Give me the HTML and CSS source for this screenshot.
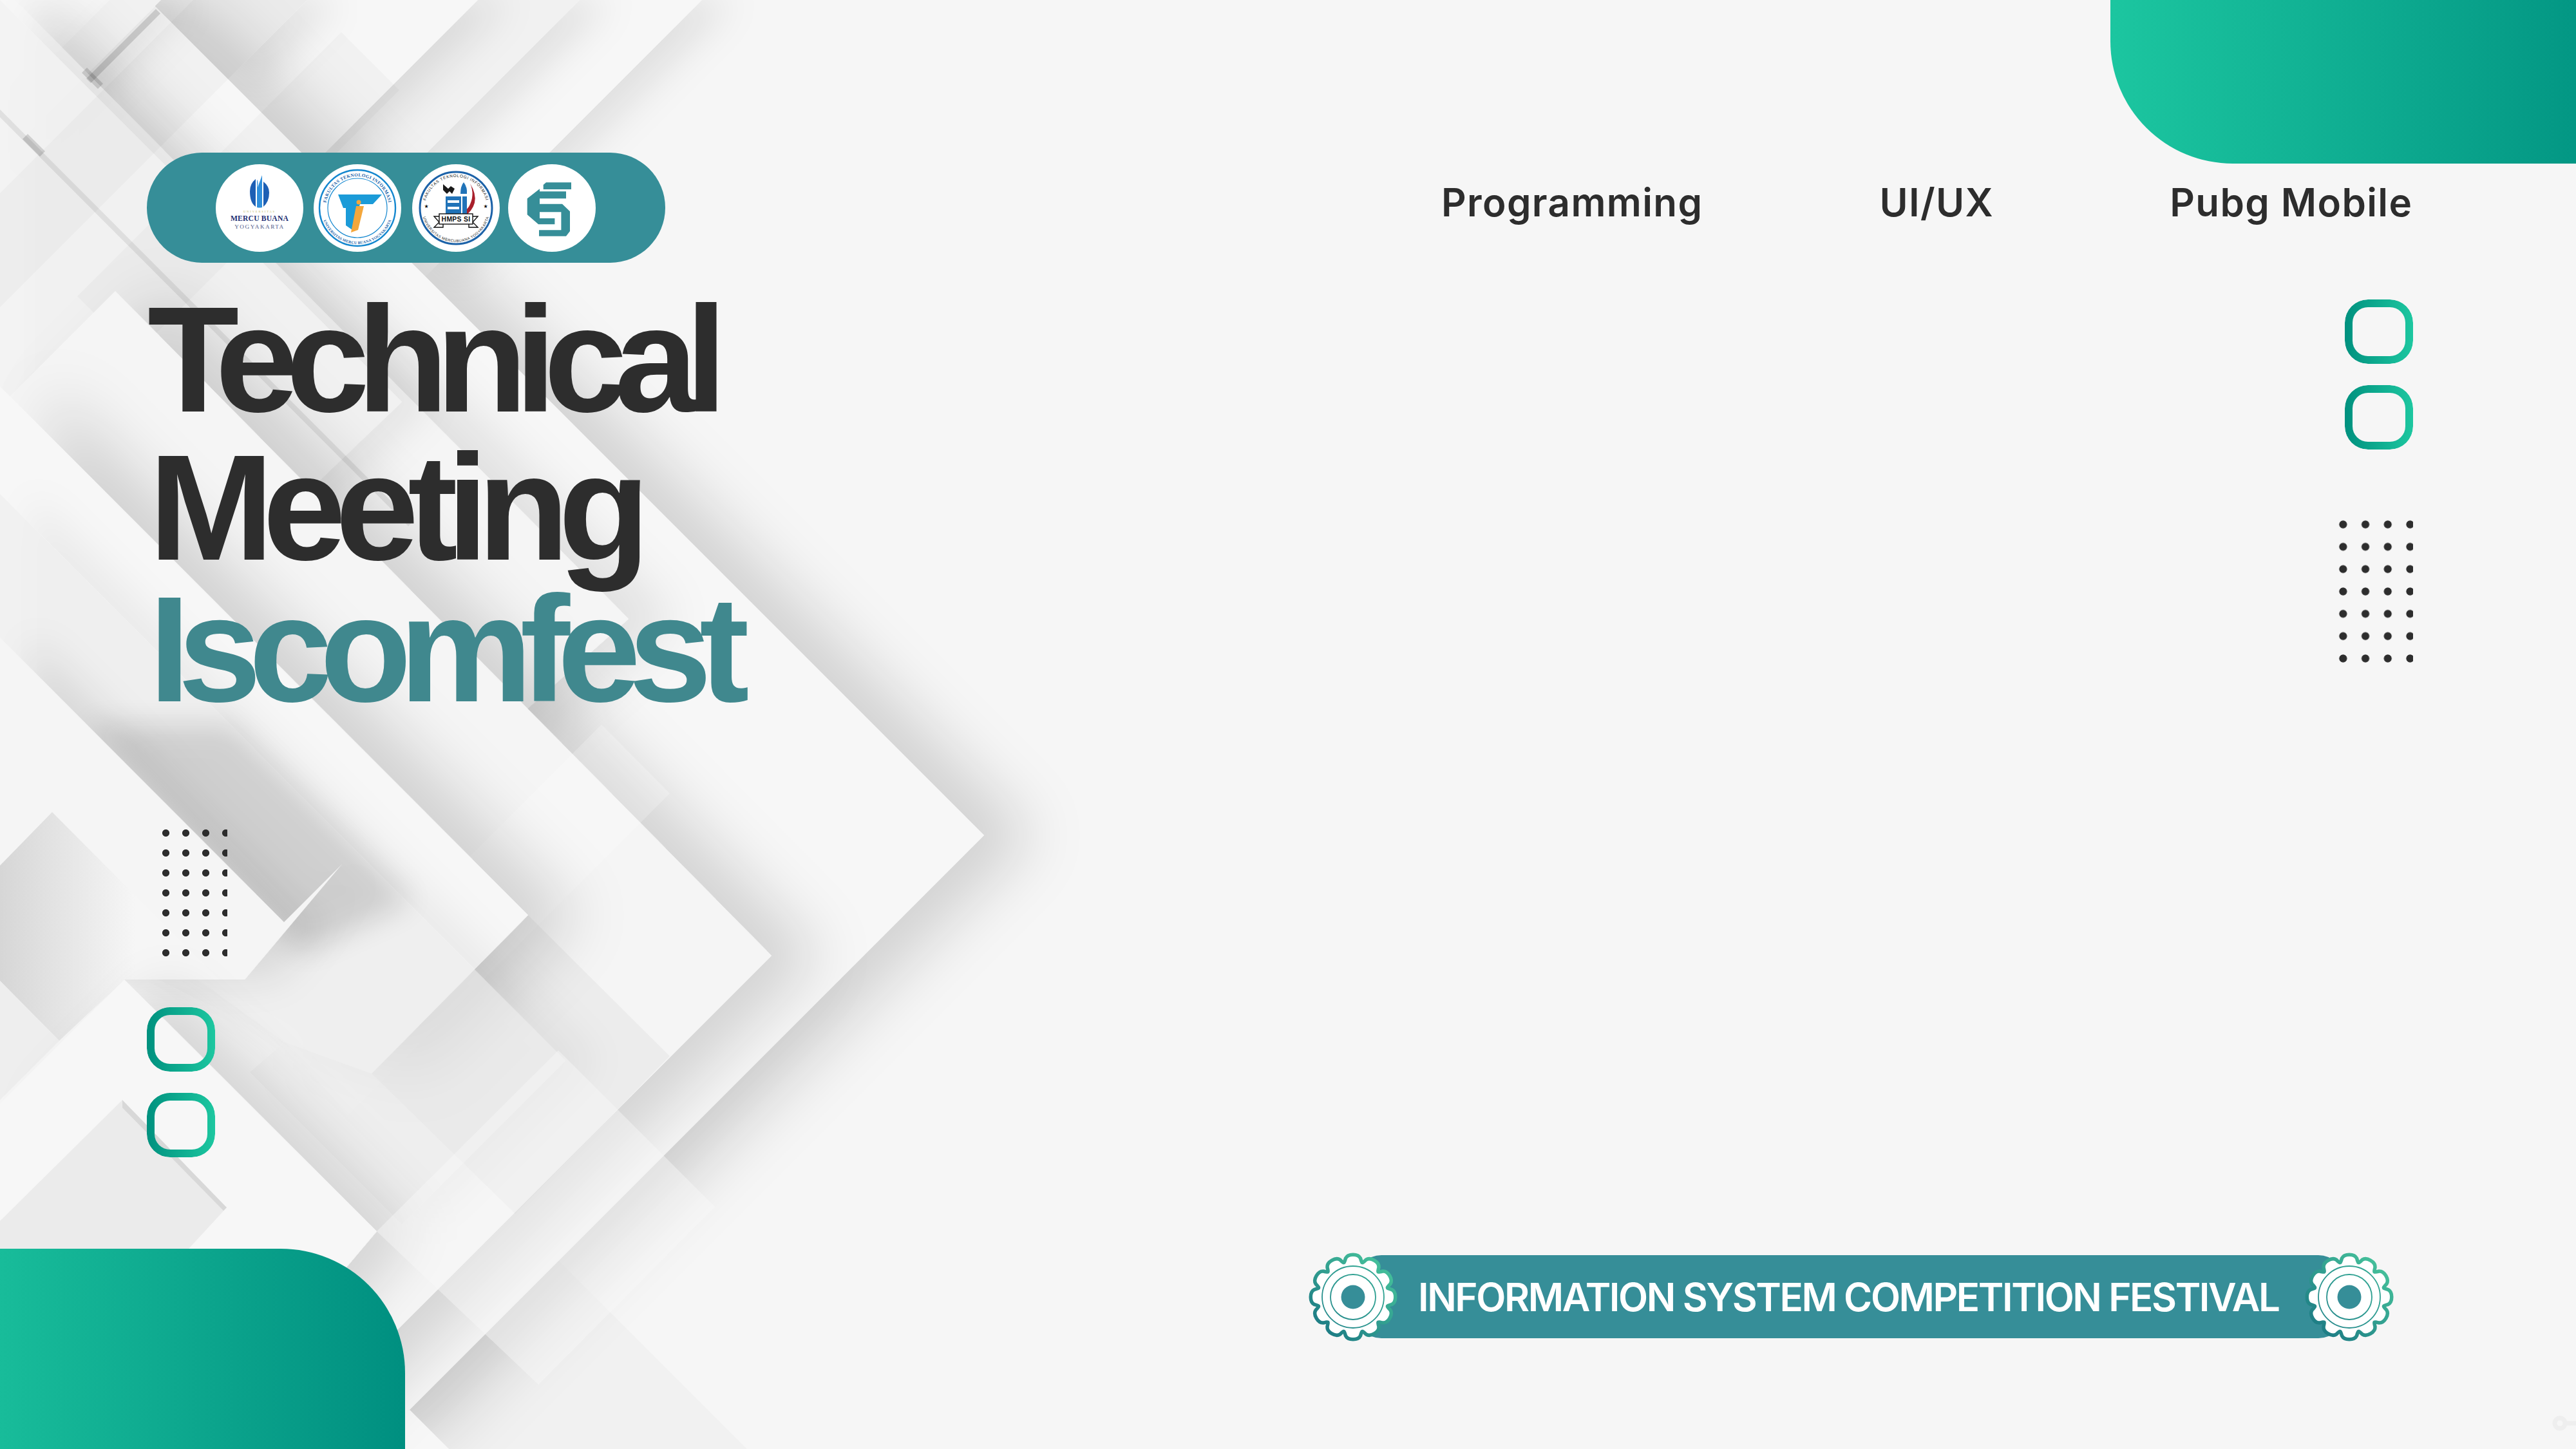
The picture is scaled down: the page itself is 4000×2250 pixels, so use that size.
FILE: index.html
```html
<!DOCTYPE html>
<html lang="id">
<head>
<meta charset="utf-8">
<title>Technical Meeting Iscomfest</title>
<link rel="stylesheet" href="styles.css">
</head>
<body>
<main class="slide">
  <svg class="bg" viewBox="0 0 4000 2250" aria-hidden="true">
    <defs>
      <filter id="sh" x="-30%" y="-30%" width="160%" height="160%"><feDropShadow dx="80" dy="0" stdDeviation="45" flood-color="#000" flood-opacity=".14"/></filter>
      <filter id="shm" x="-30%" y="-30%" width="160%" height="160%"><feDropShadow dx="70" dy="0" stdDeviation="38" flood-color="#000" flood-opacity=".12"/></filter>
      <filter id="shs" x="-30%" y="-30%" width="160%" height="160%"><feDropShadow dx="50" dy="0" stdDeviation="28" flood-color="#000" flood-opacity=".09"/></filter>
      <filter id="soft" x="-30%" y="-30%" width="160%" height="160%"><feGaussianBlur stdDeviation="22"/></filter>
      <linearGradient id="leftFade" gradientUnits="userSpaceOnUse" x1="0" y1="0" x2="210" y2="0"><stop offset="0" stop-color="#d6d6d6"/><stop offset="1" stop-color="#f6f6f6"/></linearGradient>
      <linearGradient id="gearStroke" gradientUnits="userSpaceOnUse" x1="50" y1="-55" x2="-50" y2="55"><stop offset="0" stop-color="#46c29b"/><stop offset="1" stop-color="#1c7a84"/></linearGradient>
      <linearGradient id="ringStroke" gradientUnits="userSpaceOnUse" x1="50" y1="-55" x2="-50" y2="55"><stop offset="0" stop-color="#35ad95"/><stop offset="1" stop-color="#24858b"/></linearGradient>
      <path id="tooth" d="M-17 -50 C-12 -50 -11 -52 -9 -59 Q-7 -63 0 -63 Q7 -63 9 -59 C11 -52 12 -50 17 -50 Z"/>
      <g id="gearShape">
        <circle r="52"/>
        <use href="#tooth"/><use href="#tooth" transform="rotate(30)"/><use href="#tooth" transform="rotate(60)"/><use href="#tooth" transform="rotate(90)"/><use href="#tooth" transform="rotate(120)"/><use href="#tooth" transform="rotate(150)"/><use href="#tooth" transform="rotate(180)"/><use href="#tooth" transform="rotate(210)"/><use href="#tooth" transform="rotate(240)"/><use href="#tooth" transform="rotate(270)"/><use href="#tooth" transform="rotate(300)"/><use href="#tooth" transform="rotate(330)"/>
      </g>
      <mask id="gearMask" maskUnits="userSpaceOnUse" x="-75" y="-75" width="150" height="150"><use href="#gearShape" fill="#fff" stroke="#fff" stroke-width="11" stroke-linejoin="round"/></mask>
    </defs>
    <!-- top stripes -->
    <polygon class="w shs" points="1090,0 660,430 231,0"/>
    <polygon class="w1 shs" points="900,0 560,340 220,0"/>
    <polygon class="w shs" points="742,0 480,262 218,0"/>
    <polygon class="w1 shs" points="477,0 350,127 223,0"/>
    <!-- band beyond the big chevron -->
    <polygon class="w1" points="636,2189 867,1957 1160,2250 697,2250"/>
    <!-- big chevrons -->
    <polygon class="w sh" points="231,0 1528,1297 575,2250 0,2250 0,0"/>
    <polygon class="w" points="636,2189 697,2250 560,2250"/>
    <!-- top-left stripes on the big chevron -->
    <polygon class="w1 shs" points="250,0 0,250 0,170 170,0" />
    <polygon class="w shm tl" points="23,0 976,961 560,1330 0,770 0,0"/>
    <polygon class="w1 shs tl" points="0,0 624,624 230,1000 0,770"/>
    <polygon class="st" points="477,0 0,477 0,300 300,0"/>
    <polygon class="st" points="620,140 210,550 120,460 530,50"/>
    <polygon class="rule2" points="249,21 141,129 134,122 242,14"/>
    <polygon class="rule2" points="135,105 160,130 152,138 127,113"/>
    <polygon class="rule2" points="43,208 70,235 62,243 35,216"/>
    <!-- second chevron -->
    <polygon class="w0 sh" points="0,631 179,452 1198,1484 432,2250 0,2250"/>
    <polygon class="lt" points="934,1125 1040,1232 540,1732 442,1618"/>
    <!-- third chevron -->
    <polygon class="w sh" points="0,600 820,1421 577,1667 442,1618 0,1300"/>
    <polygon class="tint" points="577,1667 820,1421 1040,1640 800,1885"/>
    <!-- translucent band with its tip at 878,1647 -->
    <polygon class="band shs" points="0,767 878,1647 624,1901 388,1665 442,1618 0,1400"/>
    <!-- shade in the notch under the title -->
    <polygon class="wedge" points="135,1125 358,1125 640,1400 470,1480"/>
    <polygon class="w0 shs" points="0,990 441,1432 531,1342 380,1521 193,1521 0,1521"/>
    <polygon class="fade" points="0,1344 81,1261 340,1521 193,1521 92,1616 0,1523"/>
    <polygon class="pale" points="0,1523 92,1616 0,1708"/>
    <!-- lower left sheets -->
    <polygon class="w shm" points="0,1714 193,1521 585,1912 300,2250 0,2250"/>
    <polygon class="over" points="585,1912 867,1631 1110,1874 836,2150"/>
    <polygon class="fade2" points="0,1896 190,1708 352,1875 293,1939 0,1939"/>
    <polygon class="rule" points="0,170 640,811 634,817 0,182"/>
    <polygon class="rule" points="190,1708 352,1875 347,1880 190,1720"/>
    <circle class="mark" cx="3975" cy="2210" r="8"/><path class="mark" d="M3983 2210H4000"/>
  </svg>

  <div class="corner corner-top"></div>
  <div class="corner corner-bottom"></div>

  <div class="columns">
    <section class="left">
      <div class="pill">
        <div class="logo logo-a">
          <svg viewBox="0 0 136 136">
            <path class="fl1" d="M53 42Q53 30 62 23V66Q53 60 53 42Z"/>
            <path class="fl2" d="M64 67V24Q66 25 65 36L72 17V67Q68 68 64 67Z"/>
            <path class="fl1" d="M74 66V27Q83 34 83 44Q83 58 74 66Z"/>
            <text class="t-uni" x="68" y="75" text-anchor="middle">UNIVERSITAS</text>
            <text class="t-mb" x="68" y="88" text-anchor="middle">MERCU BUANA</text>
            <text class="t-yk" x="68" y="100" text-anchor="middle">YOGYAKARTA</text>
          </svg>
        </div>
        <div class="logo logo-b">
          <svg viewBox="0 0 136 136">
            <defs><path id="arcTop" d="M19 68A49 49 0 0 1 117 68"/><path id="arcBot" d="M12 68A56 56 0 0 0 124 68"/></defs>
            <circle class="ring-b" cx="68" cy="68" r="59"/>
            <circle class="ring-b2" cx="68" cy="68" r="46"/>
            <text class="t-arc"><textPath href="#arcTop" startOffset="50%" text-anchor="middle">FAKULTAS TEKNOLOGI INFORMASI</textPath></text>
            <text class="t-arc2"><textPath href="#arcBot" startOffset="50%" text-anchor="middle">UNIVERSITAS MERCU BUANA YOGYAKARTA</textPath></text>
            <path class="t-blue" d="M38 47H106L92 62H72L60 102L50 95V68H46Z"/>
            <circle class="t-org" cx="70" cy="59" r="3.5"/>
            <path class="t-org" d="M66 65H78L69 102L58 106Z"/>
          </svg>
        </div>
        <div class="logo logo-c">
          <svg viewBox="0 0 136 136">
            <defs><path id="arcTop3" d="M20 68A48 48 0 0 1 116 68"/><path id="arcBot3" d="M15 68A53 53 0 0 0 121 68"/></defs>
            <circle class="ring-c" cx="68" cy="68" r="56"/>
            <text class="t-arc3"><textPath href="#arcTop3" startOffset="50%" text-anchor="middle">FAKULTAS TEKNOLOGI INFORMASI</textPath></text>
            <text class="t-arc4"><textPath href="#arcBot3" startOffset="50%" text-anchor="middle">UNIVERSITAS MERCUBUANA YOGYAKARTA</textPath></text>
            <path class="c-red" d="M90 30Q110 62 78 84Q60 94 42 78Q70 90 88 66Q98 48 90 30Z"/>
            <path class="c-blk" d="M48 31L56 38L60 34L66 38L62 46L58 42L54 46L48 40Z"/>
            <path class="c-blue" d="M75 46Q75 34 80 28Q86 36 85 46Z"/>
            <rect class="c-blue" x="52" y="50" width="24" height="28"/>
            <rect class="c-wht" x="55" y="56" width="18" height="4"/>
            <rect class="c-wht" x="55" y="66" width="18" height="4"/>
            <rect class="c-blue" x="78" y="50" width="7" height="28"/>
            <path class="c-rib" d="M34 81H48V98H34L42 90Z"/><path class="c-rib" d="M102 81H88V98H102L94 90Z"/>
            <rect class="c-ban" x="42" y="77" width="52" height="16"/>
            <text class="t-hmps" x="68" y="89" text-anchor="middle">HMPS SI</text>
            <text class="t-star" x="22" y="68" text-anchor="middle">★</text>
            <text class="t-star" x="114" y="68" text-anchor="middle">★</text>
          </svg>
        </div>
        <div class="logo logo-d">
          <svg viewBox="0 0 136 136">
            <path class="d-fill" d="M54.7 32L59 28.3H98V39H54.7Z"/>
            <path class="d-fill" d="M29.7 53.3L49 38.3V42.3H90V53.3H49V61.7H84L96 73.3V104L90 111.7H48V102.3H82.4V74.3H49V84H72.4V93.3H47L29.7 78.3Z"/>
          </svg>
        </div>
      </div>
      <h1 class="title">
        <span class="tl-line tl-one">Technical</span>
        <span class="tl-line tl-two">Meeting</span>
        <span class="tl-line tl-three">Iscomfest</span>
      </h1>
      <div class="dots dots-left"></div>
      <div class="rings rings-left"><span class="ring"></span><span class="ring"></span></div>
    </section>

    <section class="right">
      <nav class="nav">
        <span class="nav-a">Programming</span>
        <span class="nav-b">UI/UX</span>
        <span class="nav-c">Pubg Mobile</span>
      </nav>
      <div class="rings rings-right"><span class="ring"></span><span class="ring"></span></div>
      <div class="dots dots-right"></div>
      <div class="banner">
        <svg class="gear gear-l" viewBox="-75 -75 150 150"><rect x="-75" y="-75" width="150" height="150" fill="url(#gearStroke)" mask="url(#gearMask)"/><use href="#gearShape" fill="#fff"/><circle class="gr" r="48"/><circle class="gr" r="35"/><circle class="gc" r="18.5"/></svg>
        <span class="banner-text">INFORMATION SYSTEM COMPETITION FESTIVAL</span>
        <svg class="gear gear-r" viewBox="-75 -75 150 150"><rect x="-75" y="-75" width="150" height="150" fill="url(#gearStroke)" mask="url(#gearMask)"/><use href="#gearShape" fill="#fff"/><circle class="gr" r="48"/><circle class="gr" r="35"/><circle class="gc" r="18.5"/></svg>
      </div>
    </section>
  </div>
</main>
</body>
</html>
```
FILE: styles.css
```css
* { box-sizing: border-box; }
html, body { margin: 0; padding: 0; }
.slide {
  position: relative;
  width: 4000px;
  height: 2250px;
  overflow: hidden;
  background: #f6f6f6;
  font-family: "Liberation Sans", Arial, sans-serif;
}
.bg { position: absolute; inset: 0; width: 4000px; height: 2250px; }
.w { fill: #f7f7f7; }
.w0 { fill: #f5f5f5; }
.w1 { fill: #f1f1f1; }
.tl { fill-opacity: .75; }
.lt { fill: #fff; opacity: .22; }
.tint { fill: #000; opacity: .035; }
.band { fill: #ececec; fill-opacity: .55; }
.over { fill: #f8f8f8; opacity: .45; }
.st { fill: #000; opacity: .025; }
.wedge { fill: #000; opacity: .13; filter: url(#soft); }
.fade { fill: url(#leftFade); }
.pale { fill: #eeeeee; }
.fade2 { fill: #e9e9e9; opacity: .85; }
.sh { filter: url(#sh); }
.shm { filter: url(#shm); }
.shs { filter: url(#shs); }
.rule { fill: #000; opacity: .08; }
.rule2 { fill: #000; opacity: .14; }
.mark { fill: none; stroke: #eeeeee; stroke-width: 7; }

.corner { position: absolute; }
.corner-top {
  top: 0; right: 0; width: 723px; height: 254px;
  border-bottom-left-radius: 190px;
  background: linear-gradient(90deg, #1cc6a0, #039784);
}
.corner-bottom {
  left: 0; bottom: 0; width: 629px; height: 311px;
  border-top-right-radius: 193px;
  background: linear-gradient(90deg, #18bc9a, #008f80);
}

.columns { position: relative; display: grid; grid-template-columns: 2000px 2000px; height: 2250px; }
.left { display: flex; flex-direction: column; align-items: flex-start; padding: 237px 0 0 228px; }

.pill {
  display: flex; align-items: center;
  width: 805px; height: 171px;
  padding-left: 107px;
  border-radius: 86px;
  background: #368e98;
}
.logo { flex: none; width: 136px; height: 136px; border-radius: 50%; background: #fff; }
.logo svg { display: block; width: 136px; height: 136px; }
.logo-b { margin-left: 16px; }
.logo-c { margin-left: 17px; }
.logo-d { margin-left: 13px; }
.fl1 { fill: #1d5fb4; }
.fl2 { fill: #2f8fdc; }
.t-uni { font: 4.5px "Liberation Serif", serif; letter-spacing: 1.9px; fill: #b8b65e; }
.t-mb { font: bold 11.6px "Liberation Serif", serif; letter-spacing: .2px; fill: #1d2f72; }
.t-yk { font: 9.2px "Liberation Serif", serif; letter-spacing: 1.5px; fill: #4f5a8a; }
.ring-b { fill: none; stroke: #1487cf; stroke-width: 2.4; }
.ring-b2 { fill: none; stroke: #1487cf; stroke-width: 1.2; }
.t-arc { font: bold 7.2px "Liberation Serif", serif; letter-spacing: .35px; fill: #1a5fa8; }
.t-arc2 { font: bold 6px "Liberation Serif", serif; letter-spacing: .15px; fill: #1a5fa8; }
.t-blue { fill: #1b9bd8; }
.t-org { fill: #f4a73c; }
.ring-c { fill: none; stroke: #1c62a8; stroke-width: 3; }
.t-arc3 { font: 6.4px "Liberation Sans", sans-serif; letter-spacing: .7px; fill: #222; }
.t-arc4 { font: 5.8px "Liberation Sans", sans-serif; letter-spacing: .5px; fill: #222; }
.c-red { fill: #a81f2b; }
.c-blk { fill: #1a1a1a; }
.c-blue { fill: #2173b8; }
.c-wht { fill: #fff; }
.c-rib { fill: #fff; stroke: #111; stroke-width: 1.4; }
.c-ban { fill: #fff; stroke: #111; stroke-width: 1.4; }
.t-hmps { font: bold 10.4px "Liberation Sans", sans-serif; letter-spacing: .3px; fill: #111; }
.t-star { font: 8px "DejaVu Sans", sans-serif; fill: #111; }
.d-fill { fill: #368e98; }

.title {
  margin: 35px 0 0 3px;
  font-size: 233px;
  font-weight: 700;
  color: #2d2d2d;
}
.tl-line { display: block; line-height: 230px; white-space: nowrap; }
.tl-one { margin-left: -2px; letter-spacing: -19.7px; }
.tl-two { letter-spacing: -17px; }
.tl-three { margin-top: -5px; margin-left: 0; line-height: 220px; letter-spacing: -19.4px; color: #40888e; }

.dots-left {
  width: 111px; height: 217px;
  margin: 160px 0 0 14px;
  background-image: radial-gradient(circle, #2d2d2d 5.2px, rgba(45,45,45,0) 5.9px);
  background-size: 31px 31px;
}
.rings { display: flex; flex-direction: column; gap: 33px; }
.rings-left { margin-top: 69px; }
.ring {
  display: block;
  width: 106px; height: 100px;
  padding: 12px;
  border-radius: 36px;
  background: linear-gradient(90deg, #00917f, #1dc7a0);
  -webkit-mask: linear-gradient(#000 0 0) content-box, linear-gradient(#000 0 0);
  -webkit-mask-composite: xor;
  mask-composite: exclude;
}

.right {
  display: flex; flex-direction: column; align-items: flex-end;
  padding-right: 253px;
}
.nav {
  display: flex;
  margin-top: 277px;
  width: 1509px;
  font-family: Inter, sans-serif;
  font-weight: 600;
  font-size: 60px;
  letter-spacing: 1.4px;
  line-height: 74px;
  white-space: nowrap;
  color: #2d2d2d;
}
.nav-a { margin-right: 274px; }
.nav-b { margin-right: 273px; }
.rings-right { margin-top: 114px; }
.dots-right {
  width: 126px; height: 243px;
  margin-top: 99px;
  background-image: radial-gradient(circle, #2d2d2d 5.7px, rgba(45,45,45,0) 6.4px);
  background-size: 34.7px 34.7px;
}
.banner {
  position: relative;
  display: flex; align-items: center;
  width: 1535px; height: 129px;
  margin: auto 107px 172px 0;
  padding-left: 97px;
  border-radius: 40px;
  background: #368e98;
}
.banner-text {
  font-family: Inter, sans-serif;
  font-weight: 600;
  font-size: 60px;
  letter-spacing: -2.4px;
  color: #fff;
  white-space: nowrap;
}
.gear { position: absolute; top: -10px; width: 150px; height: 150px; }
.gear-l { left: -79px; }
.gear-r { right: -83px; }
.gr { fill: none; stroke: url(#ringStroke); stroke-width: 1.8; }
.gc { fill: #368e98; }
```
